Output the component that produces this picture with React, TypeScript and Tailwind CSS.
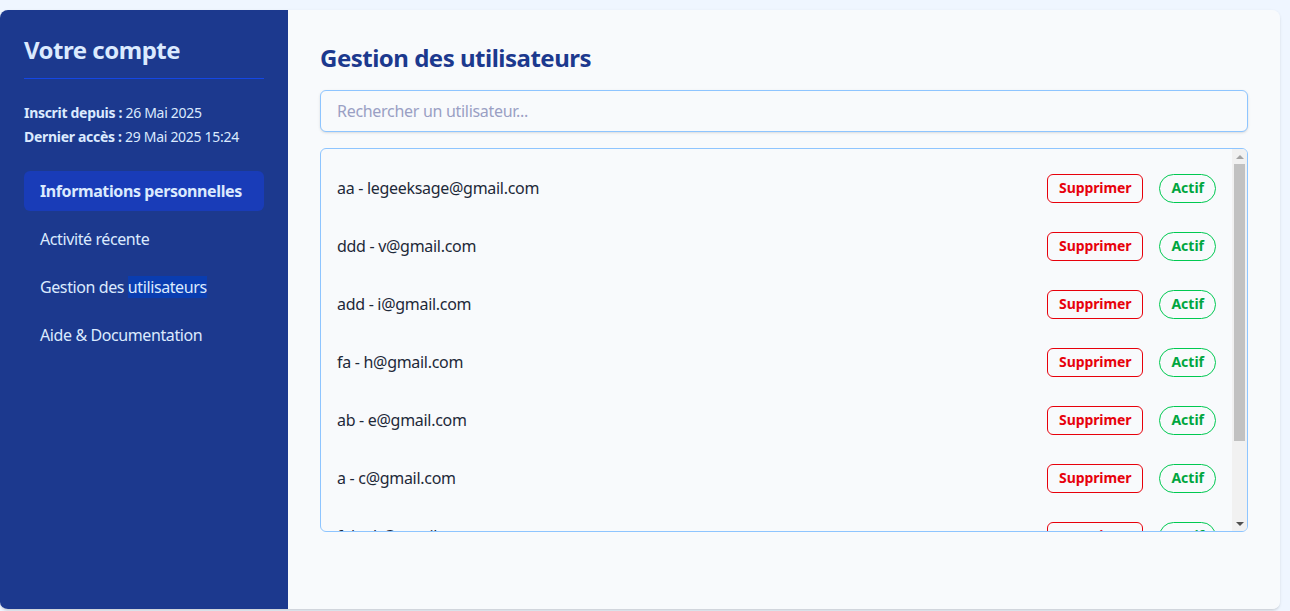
const users = [
  { name: 'aa', email: 'legeeksage@gmail.com' },
  { name: 'ddd', email: 'v@gmail.com' },
  { name: 'add', email: 'i@gmail.com' },
  { name: 'fa', email: 'h@gmail.com' },
  { name: 'ab', email: 'e@gmail.com' },
  { name: 'a', email: 'c@gmail.com' },
  { name: 'fab', email: 'b@gmail.com' },
  { name: 'test', email: 'a@gmail.com' },
]

const nav = ['Informations personnelles', 'Activité récente', 'Gestion des utilisateurs', 'Aide & Documentation']

export default function App() {
  return (
    <div className="min-h-[611px] bg-blue-50 pt-[10px] pr-[10px] font-['Noto_Sans','Lato',sans-serif]">
      <div className="flex h-[600px] overflow-hidden rounded-lg shadow-sm border-b border-gray-300">
        <aside className="w-[288px] shrink-0 bg-blue-900 px-6 pt-6 text-blue-100">
          <h1 className="text-2xl leading-8 font-bold pb-3 border-b border-blue-700 tracking-[-0.5px]">Votre compte</h1>
          <div className="mt-[22px] text-sm leading-6 tracking-[-0.3px]">
            <p>
              <span className="font-bold">Inscrit depuis :</span> 26 Mai 2025
            </p>
            <p>
              <span className="font-bold">Dernier accès :</span> 29 Mai 2025 15:24
            </p>
          </div>
          <nav className="mt-[22px] flex flex-col gap-2 tracking-[-0.4px]">
            {nav.map((item, i) => (
              <div
                key={item}
                className={
                  i === 0
                    ? 'h-10 flex items-center px-4 rounded-md bg-blue-800 font-bold'
                    : 'h-10 flex items-center px-4'
                }
              >
                {i === 2 ? (
                  <span>
                    Gestion des <span className="bg-[#0a3db0]">utilisateurs</span>
                  </span>
                ) : (
                  item
                )}
              </div>
            ))}
          </nav>
        </aside>

        <main className="flex-1 bg-slate-50 pl-8 pr-8 pt-8">
          <h2 className="text-2xl leading-8 font-bold text-blue-900 mb-4 tracking-[-0.5px]">Gestion des utilisateurs</h2>
          <input
            type="text"
            placeholder="Rechercher un utilisateur..."
            className="w-full h-[42px] px-4 rounded-md border border-blue-300 bg-slate-50 shadow-sm text-base text-gray-800 placeholder:text-[#9aa0c4] outline-none tracking-[-0.3px]"
          />
          <div className="mt-4 h-[384px] flex overflow-hidden rounded-md border border-blue-300">
            <div className="flex-1 overflow-hidden pt-[10px]">
              {users.map((u) => (
                <div key={u.name} className="h-[58px] flex items-center justify-between pl-4 pr-4">
                  <span className="text-base text-gray-800 tracking-[-0.3px]">
                    {u.name} - {u.email}
                  </span>
                  <div className="flex items-center gap-4">
                    <button className="px-[11px] h-[29px] rounded-md border border-red-600 text-sm font-bold text-red-600 tracking-[-0.1px]">
                      Supprimer
                    </button>
                    <button className="px-[11px] h-[29px] rounded-full border border-green-500 text-sm font-bold text-green-600">
                      Actif
                    </button>
                  </div>
                </div>
              ))}
            </div>
            <div className="w-[15px] shrink-0 flex flex-col bg-[#f1f1f1]">
              <div className="h-[15px] flex items-center justify-center">
                <span className="w-0 h-0 border-x-[4px] border-x-transparent border-b-[4px] border-b-[#a3a3a3]" />
              </div>
              <div className="flex-1 px-[2px]">
                <div className="h-[277px] bg-[#c1c1c1]" />
              </div>
              <div className="h-[15px] flex items-center justify-center">
                <span className="w-0 h-0 border-x-[4px] border-x-transparent border-t-[4px] border-t-[#505050]" />
              </div>
            </div>
          </div>
        </main>
      </div>
    </div>
  )
}
